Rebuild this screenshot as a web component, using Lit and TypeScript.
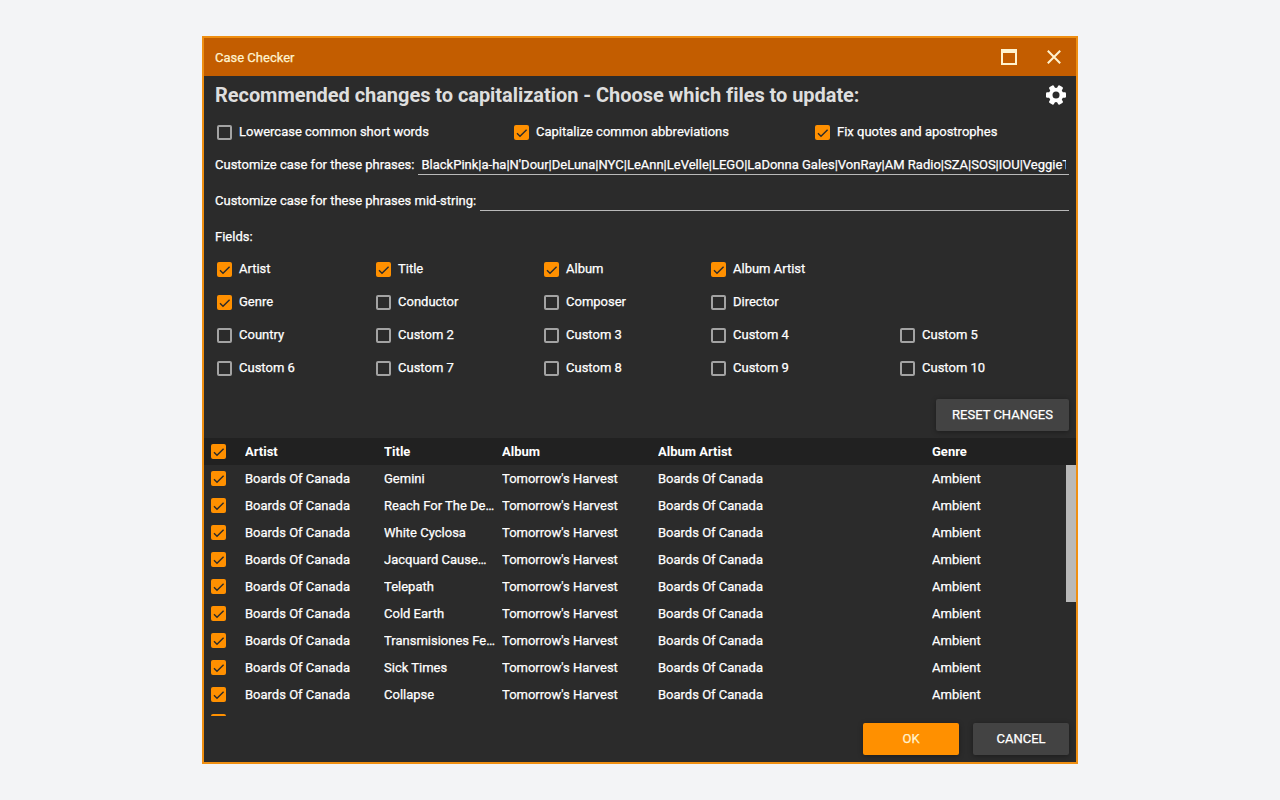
import { LitElement, html, css } from 'lit';
import { customElement, property } from 'lit/decorators.js';

@customElement('check-box')
export class CheckBox extends LitElement {
  @property({ type: Boolean }) checked = false;

  static styles = css`
    :host {
      display: flex;
      align-items: flex-start;
      gap: 7px;
      line-height: 15px;
      white-space: nowrap;
    }
    .box {
      box-sizing: border-box;
      flex: none;
      width: 15px;
      height: 15px;
      margin-top: 1px;
      border: 2px solid #a3a3a3;
      border-radius: 2px;
    }
    .box.on {
      border: none;
      background: #ff9000;
    }
    svg {
      display: block;
    }
  `;

  render() {
    return html`
      ${this.checked
        ? html`<div class="box on">
            <svg width="15" height="15" viewBox="0 0 15 15">
              <path d="M3 8.3 L6 11.3 L12.6 4.8" fill="none" stroke="#2b2b2b" stroke-width="1.4" />
            </svg>
          </div>`
        : html`<div class="box"></div>`}
      <slot></slot>
    `;
  }
}

@customElement('app-root')
export class AppRoot extends LitElement {
  options = [
    ['Lowercase common short words', false],
    ['Capitalize common abbreviations', true],
    ['Fix quotes and apostrophes', true],
  ] as [string, boolean][];

  fields = [
    ['Artist', 'Title', 'Album', 'Album Artist', ''],
    ['Genre', 'Conductor', 'Composer', 'Director', ''],
    ['Country', 'Custom 2', 'Custom 3', 'Custom 4', 'Custom 5'],
    ['Custom 6', 'Custom 7', 'Custom 8', 'Custom 9', 'Custom 10'],
  ];

  selected = ['Artist', 'Title', 'Album', 'Album Artist', 'Genre'];

  phrases =
    "BlackPink|a-ha|N'Dour|DeLuna|NYC|LeAnn|LeVelle|LEGO|LaDonna Gales|VonRay|AM Radio|SZA|SOS|IOU|VeggieTales";

  titles = [
    'Gemini',
    'Reach For The Dead',
    'White Cyclosa',
    'Jacquard Causeway',
    'Telepath',
    'Cold Earth',
    'Transmisiones Ferox',
    'Sick Times',
    'Collapse',
  ];

  static styles = css`
    :host {
      display: flex;
      align-items: center;
      justify-content: center;
      height: 100vh;
      background: #f3f4f6;
      font-family: Roboto, sans-serif;
      font-size: 13px;
      font-weight: 400;
      -webkit-text-stroke-width: 0.25px;
      color: #fff;
    }
    .window {
      box-sizing: border-box;
      display: flex;
      flex-direction: column;
      width: 876px;
      height: 728px;
      border: 2px solid #ef8f12;
      background: #2b2b2b;
    }
    .titlebar {
      display: flex;
      align-items: center;
      height: 38px;
      flex: none;
      padding: 0 14px 0 11px;
      background: #c35d00;
      color: #fff3cf;
    }
    .titlebar span {
      flex: 1;
    }
    .titlebar svg + svg {
      margin-left: 29px;
    }
    svg {
      display: block;
    }
    .heading {
      display: flex;
      align-items: center;
      justify-content: space-between;
      height: 38px;
      padding: 0 10px 0 11px;
    }
    h1 {
      margin: 0;
      font-size: 20px;
      font-weight: 700;
      letter-spacing: -0.05px;
      -webkit-text-stroke-width: 0;
      color: #dedede;
    }
    .options {
      display: grid;
      grid-template-columns: 297px 301px 1fr;
      padding: 10px 0 0 13px;
      height: 24px;
    }
    .line {
      display: flex;
      height: 27px;
      margin: 0 7px 9px 11px;
      line-height: 17px;
    }
    .line label {
      padding-top: 8px;
      margin-right: 4px;
      white-space: nowrap;
    }
    .line .input {
      flex: 1;
      min-width: 0;
      padding: 8px 3px 0;
      border-bottom: 1px solid #b9b9b9;
    }
    .line .value {
      overflow: hidden;
      white-space: nowrap;
    }
    .caption {
      height: 33px;
      padding: 8px 11px 0;
      line-height: 17px;
      box-sizing: border-box;
    }
    .fields {
      display: grid;
      grid-template-columns: 159px 168px 167px 189px 1fr;
      grid-auto-rows: 33px;
      padding: 0 0 0 13px;
    }
    .fields check-box {
      padding-top: 8px;
    }
    .reset {
      display: flex;
      justify-content: flex-end;
      padding: 14px 7px 7px;
    }
    .btn {
      width: 96px;
      height: 32px;
      border-radius: 2px;
      line-height: 31px;
      text-align: center;
      background: #434343;
      box-shadow: 0 1px 5px rgba(0, 0, 0, 0.35);
    }
    .btn.wide {
      width: 133px;
    }
    .btn.primary {
      background: #ff9000;
      color: #fff3cf;
    }
    .row {
      display: grid;
      grid-template-columns: 34px 139px 118px 156px 274px 1fr;
      height: 27px;
      line-height: 27px;
      padding-left: 7px;
    }
    .row check-box {
      padding-top: 5px;
    }
    .row.head {
      flex: none;
      background: #212121;
      font-weight: 700;
      -webkit-text-stroke-width: 0;
    }
    .cell {
      overflow: hidden;
      white-space: nowrap;
      text-overflow: ellipsis;
      padding-right: 6px;
    }
    .body {
      display: flex;
      height: 251px;
      overflow: hidden;
    }
    .rows {
      flex: 1;
    }
    .thumb {
      width: 10px;
      height: 137px;
      background: #b9b9b9;
    }
    .footer {
      display: flex;
      justify-content: flex-end;
      gap: 14px;
      padding: 7px;
    }
  `;

  renderRow(title: string) {
    return html`
      <div class="row">
        <check-box checked></check-box>
        <div class="cell">Boards Of Canada</div>
        <div class="cell">${title}</div>
        <div class="cell">Tomorrow's Harvest</div>
        <div class="cell">Boards Of Canada</div>
        <div class="cell">Ambient</div>
      </div>
    `;
  }

  render() {
    return html`
      <div class="window">
        <div class="titlebar">
          <span>Case Checker</span>
          <svg width="16" height="16" viewBox="0 0 16 16">
            <path d="M0 0H16V16H0ZM2 4V14H14V4Z" fill="#fff3cf" fill-rule="evenodd" />
          </svg>
          <svg width="16" height="16" viewBox="0 0 16 16">
            <path d="M1.8 1.8L14.2 14.2M14.2 1.8L1.8 14.2" stroke="#fff3cf" stroke-width="2" />
          </svg>
        </div>
        <div class="heading">
          <h1>Recommended changes to capitalization - Choose which files to update:</h1>
          <svg width="20" height="20" viewBox="-10 -10 20 20">
            <g fill="#fff">
              <circle r="7.3" />
              <rect x="-10" y="-2.7" width="20" height="5.4" rx="1.2" />
              <rect x="-10" y="-2.7" width="20" height="5.4" rx="1.2" transform="rotate(60)" />
              <rect x="-10" y="-2.7" width="20" height="5.4" rx="1.2" transform="rotate(120)" />
            </g>
            <circle r="3.5" fill="#2b2b2b" />
          </svg>
        </div>
        <div class="options">
          ${this.options.map(([name, on]) => html`<check-box ?checked=${on}>${name}</check-box>`)}
        </div>
        <div class="line">
          <label>Customize case for these phrases:</label>
          <div class="input"><div class="value">${this.phrases}</div></div>
        </div>
        <div class="line">
          <label>Customize case for these phrases mid-string:</label>
          <div class="input"></div>
        </div>
        <div class="caption">Fields:</div>
        <div class="fields">
          ${this.fields.flat().map((name) =>
            name
              ? html`<check-box ?checked=${this.selected.includes(name)}>${name}</check-box>`
              : html`<div></div>`
          )}
        </div>
        <div class="reset"><div class="btn wide">RESET CHANGES</div></div>
        <div class="row head">
          <check-box checked></check-box>
          <div class="cell">Artist</div>
          <div class="cell">Title</div>
          <div class="cell">Album</div>
          <div class="cell">Album Artist</div>
          <div class="cell">Genre</div>
        </div>
        <div class="body">
          <div class="rows">
            ${this.titles.map((t) => this.renderRow(t))}
            <div class="row"><check-box checked></check-box></div>
          </div>
          <div class="thumb"></div>
        </div>
        <div class="footer">
          <div class="btn primary">OK</div>
          <div class="btn">CANCEL</div>
        </div>
      </div>
    `;
  }
}
